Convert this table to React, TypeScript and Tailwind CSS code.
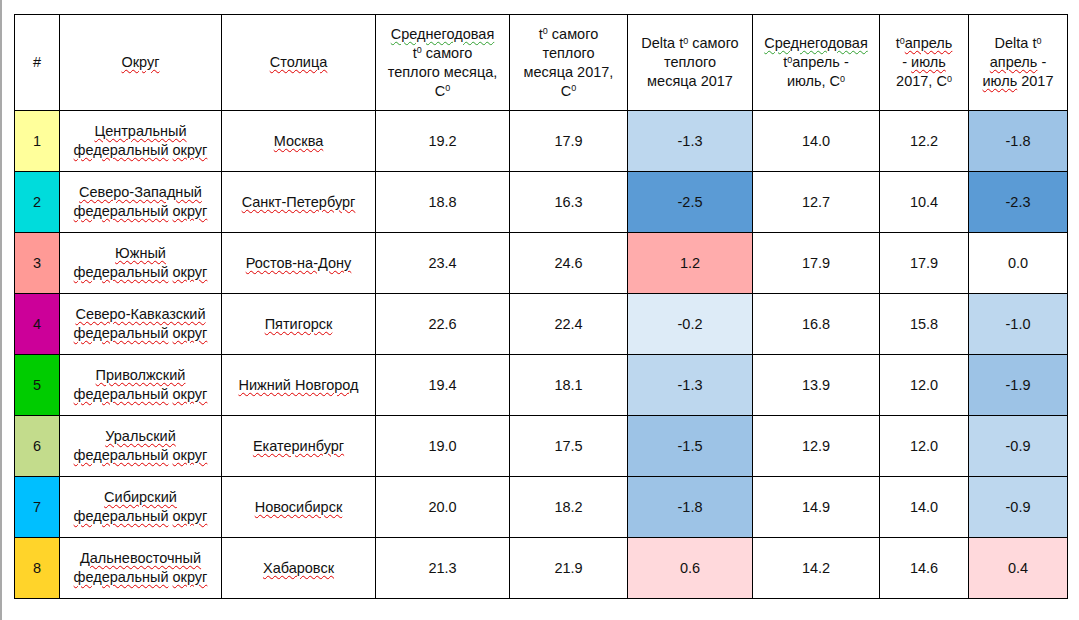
import React from "react";

const R = ({ children }: { children: React.ReactNode }) => (
  <span className="underline decoration-wavy decoration-[#e00000] decoration-1 underline-offset-[2px]">{children}</span>
);
const G = ({ children }: { children: React.ReactNode }) => (
  <span className="underline decoration-wavy decoration-[#2f9f2f] decoration-1 underline-offset-[2px]">{children}</span>
);
const D = () => <sup className="text-[9px] -top-[0.5em]">0</sup>;

type Row = {
  n: string;
  c: string;
  name: string;
  city: string;
  a: string;
  b: string;
  d: string;
  dc: string;
  e: string;
  f: string;
  g: string;
  gc: string;
};

const rows: Row[] = [
  { n: "1", c: "bg-[#ffff9b]", name: "Центральный", city: "Москва", a: "19.2", b: "17.9", d: "-1.3", dc: "bg-[#bdd7ee]", e: "14.0", f: "12.2", g: "-1.8", gc: "bg-[#9dc3e6]" },
  { n: "2", c: "bg-[#00dcdc]", name: "Северо-Западный", city: "Санкт-Петербург", a: "18.8", b: "16.3", d: "-2.5", dc: "bg-[#5b9bd5]", e: "12.7", f: "10.4", g: "-2.3", gc: "bg-[#5b9bd5]" },
  { n: "3", c: "bg-[#ff9a96]", name: "Южный", city: "Ростов-на-Дону", a: "23.4", b: "24.6", d: "1.2", dc: "bg-[#ffacac]", e: "17.9", f: "17.9", g: "0.0", gc: "bg-white" },
  { n: "4", c: "bg-[#cc0099]", name: "Северо-Кавказский", city: "Пятигорск", a: "22.6", b: "22.4", d: "-0.2", dc: "bg-[#ddebf7]", e: "16.8", f: "15.8", g: "-1.0", gc: "bg-[#bdd7ee]" },
  { n: "5", c: "bg-[#00cc00]", name: "Приволжский", city: "Нижний Новгород", a: "19.4", b: "18.1", d: "-1.3", dc: "bg-[#bdd7ee]", e: "13.9", f: "12.0", g: "-1.9", gc: "bg-[#9dc3e6]" },
  { n: "6", c: "bg-[#c3dc8c]", name: "Уральский", city: "Екатеринбург", a: "19.0", b: "17.5", d: "-1.5", dc: "bg-[#9dc3e6]", e: "12.9", f: "12.0", g: "-0.9", gc: "bg-[#bdd7ee]" },
  { n: "7", c: "bg-[#00bfff]", name: "Сибирский", city: "Новосибирск", a: "20.0", b: "18.2", d: "-1.8", dc: "bg-[#9dc3e6]", e: "14.9", f: "14.0", g: "-0.9", gc: "bg-[#bdd7ee]" },
  { n: "8", c: "bg-[#ffd42a]", name: "Дальневосточный", city: "Хабаровск", a: "21.3", b: "21.9", d: "0.6", dc: "bg-[#ffd9dc]", e: "14.2", f: "14.6", g: "0.4", gc: "bg-[#ffd9dc]" },
];

const cell = "flex items-center justify-center text-center border-r border-b border-black px-1";

export default function App() {
  return (
    <div
      className="flex w-[1079px] h-[620px] bg-white text-[#111] text-[14.5px] leading-[19px]"
      style={{ fontFamily: '"Liberation Sans", Arial, sans-serif' }}
    >
      <div className="w-[2px] bg-[#a9a9a9]" />
      <div className="pl-[12px] pt-[14px]">
        <div className="grid grid-cols-[45px_162px_154px_134px_118px_125px_127px_89px_99px] grid-rows-[96px_repeat(8,61px)] border-l border-t border-black">
          <div className={cell}>#</div>
          <div className={cell}><R>Округ</R></div>
          <div className={cell}><R>Столица</R></div>
          <div className={cell}>
            <div>
              <G>Среднегодовая</G><br />t<D /> самого<br />теплого месяца,<br />C<D />
            </div>
          </div>
          <div className={cell}>
            <div>
              t<D /> самого<br />теплого<br />месяца 2017,<br />C<D />
            </div>
          </div>
          <div className={cell}>
            <div>
              Delta t<D /> самого<br />теплого<br />месяца 2017
            </div>
          </div>
          <div className={cell}>
            <div>
              <G>Среднегодовая</G><br />t<D />апрель -<br />июль, C<D />
            </div>
          </div>
          <div className={cell}>
            <div>
              t<D /><R>апрель</R><br />- <R>июль</R><br />2017, C<D />
            </div>
          </div>
          <div className={cell}>
            <div>
              Delta t<D /><br /><R>апрель</R> -<br /><R>июль</R> 2017
            </div>
          </div>

          {rows.map((r) => (
            <React.Fragment key={r.n}>
              <div className={`${cell} ${r.c}`}>{r.n}</div>
              <div className={cell}>
                <div>
                  <R>{r.name}</R><br /><R>федеральный</R> <R>округ</R>
                </div>
              </div>
              <div className={cell}><R>{r.city}</R></div>
              <div className={cell}>{r.a}</div>
              <div className={cell}>{r.b}</div>
              <div className={`${cell} ${r.dc}`}>{r.d}</div>
              <div className={cell}>{r.e}</div>
              <div className={cell}>{r.f}</div>
              <div className={`${cell} ${r.gc}`}>{r.g}</div>
            </React.Fragment>
          ))}
        </div>
      </div>
    </div>
  );
}
